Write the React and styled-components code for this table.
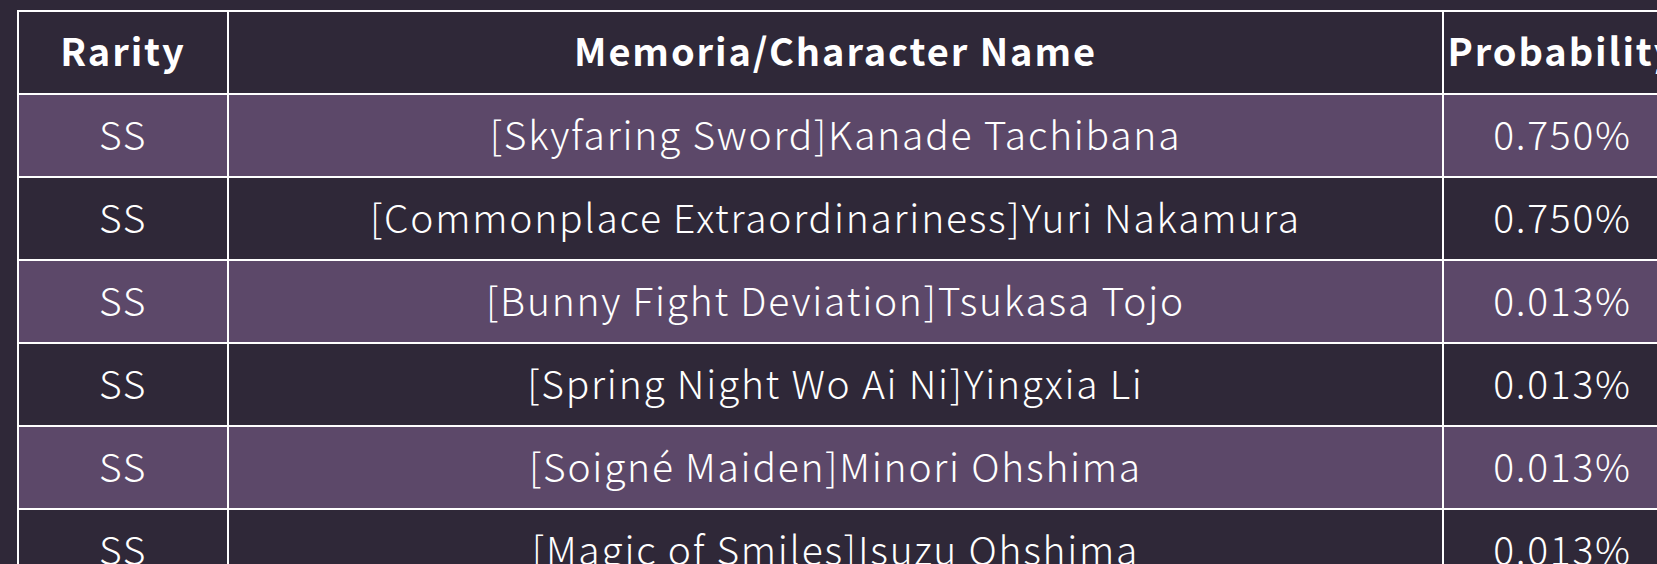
import React from 'react'
import styled, { createGlobalStyle } from 'styled-components'

const GlobalStyle = createGlobalStyle`
  html, body {
    margin: 0;
    padding: 0;
    background-color: #2f2838;
    overflow: hidden;
  }
`;

const Page = styled.div`
  padding: 10px 0 0 17px;
  font-family: "Noto Sans CJK JP", "Noto Sans", sans-serif;
  color: #ffffff;
`;

const Table = styled.table`
  border-collapse: collapse;
  border: 2px solid #ffffff;
  width: 1666px;
  table-layout: fixed;
`;

const HeadCell = styled.th`
  height: 83px;
  padding: 0 0 6px;
  box-sizing: border-box;
  border: 2px solid #ffffff;
  background-color: #2f2838;
  font-size: 38px;
  font-weight: 700;
  letter-spacing: 0.05em;
  text-align: center;
  white-space: nowrap;
`;

const Row = styled.tr`
  background-color: ${({ $odd }) => ($odd ? '#5c4869' : '#2f2838')};
`;

const Cell = styled.td`
  height: 83px;
  padding: 0 0 6px;
  box-sizing: border-box;
  border: 2px solid #ffffff;
  font-size: 39px;
  font-weight: 300;
  letter-spacing: 0.045em;
  text-align: center;
  white-space: nowrap;
`;

const items = [
  { rarity: 'SS', name: '[Skyfaring Sword]Kanade Tachibana', prob: '0.750%' },
  { rarity: 'SS', name: '[Commonplace Extraordinariness]Yuri Nakamura', prob: '0.750%' },
  { rarity: 'SS', name: '[Bunny Fight Deviation]Tsukasa Tojo', prob: '0.013%' },
  { rarity: 'SS', name: '[Spring Night Wo Ai Ni]Yingxia Li', prob: '0.013%' },
  { rarity: 'SS', name: '[Soigné Maiden]Minori Ohshima', prob: '0.013%' },
  { rarity: 'SS', name: '[Magic of Smiles]Isuzu Ohshima', prob: '0.013%' },
];

const App = () => {
  return (
    <Page>
      <GlobalStyle />
      <Table>
        <colgroup>
          <col style={{ width: '210px' }} />
          <col style={{ width: '1215px' }} />
          <col style={{ width: '239px' }} />
        </colgroup>
        <thead>
          <tr>
            <HeadCell>Rarity</HeadCell>
            <HeadCell>Memoria/Character Name</HeadCell>
            <HeadCell>Probability</HeadCell>
          </tr>
        </thead>
        <tbody>
          {items.map((it, i) => (
            <Row key={i} $odd={i % 2 === 0}>
              <Cell>{it.rarity}</Cell>
              <Cell>{it.name}</Cell>
              <Cell>{it.prob}</Cell>
            </Row>
          ))}
        </tbody>
      </Table>
    </Page>
  )
}

export default App
